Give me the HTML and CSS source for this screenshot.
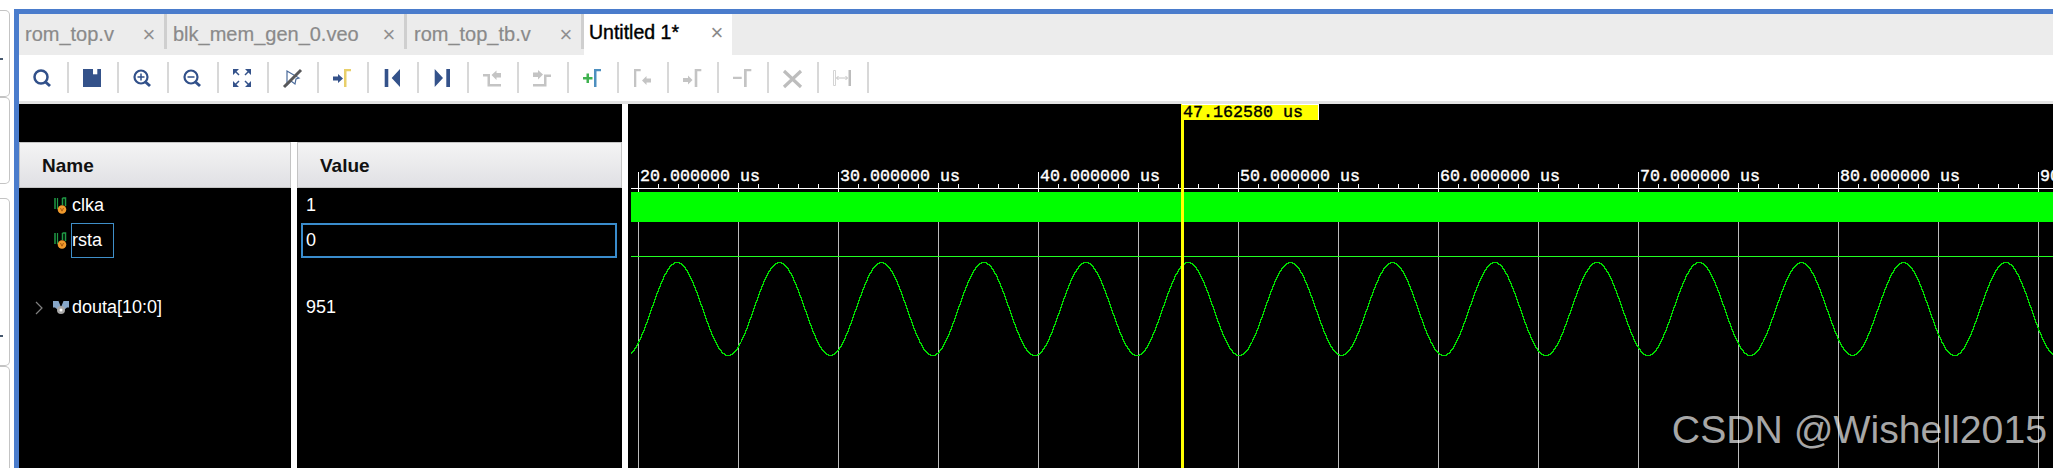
FILE: index.html
```html
<!DOCTYPE html>
<html lang="en">
<head>
    <meta charset="UTF-8">
    <title>Untitled 1</title>
    <link rel="stylesheet" href="styles.css">
</head>
<body>
    <div class="side">
        <div class="side-box"><span class="side-mark side-mark-a"></span></div>
        <div class="side-box"></div>
        <div class="side-box side-box-tall"><span class="side-mark side-mark-b"></span></div>
        <div class="side-box side-box-last"></div>
    </div>

    <div class="main">
        <div class="tabs">
            <div class="tab tab-a"><span>rom_top.v</span><span class="tab-x">×</span></div>
            <div class="tab tab-b"><span>blk_mem_gen_0.veo</span><span class="tab-x">×</span></div>
            <div class="tab tab-c"><span>rom_top_tb.v</span><span class="tab-x">×</span></div>
            <div class="tab tab-d active"><span>Untitled 1*</span><span class="tab-x">×</span></div>
        </div>

        <div class="toolbar">
            <div class="tool">
                <svg width="24" height="24" fill="none" stroke="#31508a" stroke-width="2.5"><circle cx="10" cy="12" r="6.5"/><path d="M14.5 17l4.5 4" stroke-width="3"/></svg>
            </div>
            <div class="tool">
                <svg width="24" height="24"><path d="M2 4h18v18H2z" fill="#34528a"/><path d="M12 4h4.3v5.3H12z" fill="#fff"/></svg>
            </div>
            <div class="tool">
                <svg width="24" height="24" fill="none" stroke="#31508a" stroke-width="2.2"><circle cx="10" cy="12" r="6.5"/><path d="M14.5 17l4.5 4" stroke-width="3"/><path d="M6.5 12h7M10 8.5v7" stroke-width="1.5"/></svg>
            </div>
            <div class="tool">
                <svg width="24" height="24" fill="none" stroke="#31508a" stroke-width="2.2"><circle cx="10" cy="12" r="6.5"/><path d="M14.5 17l4.5 4" stroke-width="3"/><path d="M6.5 12h7" stroke-width="1.5"/></svg>
            </div>
            <div class="tool">
                <svg width="24" height="24" fill="#34528a"><path d="M2 4h6L2 10zM20 4h-6l6 6zM2 22h6l-6-6zM20 22h-6l6-6z"/><path d="M4 6l4 4M18 6l-4 4M4 20l4-4M18 20l-4-4" stroke="#34528a" stroke-width="1.5"/></svg>
            </div>
            <div class="tool">
                <svg width="24" height="24" fill="none"><path d="M6 6v14l4-4 4 3 1-5 3-1z" stroke="#4a6a9a" stroke-width="1.2"/><path d="M3 22L20 5" stroke="#58585a" stroke-width="3"/></svg>
            </div>
            <div class="tool">
                <svg width="24" height="24"><path d="M2 11.5h5V9l5 4.5-5 4.5v-2.5H2z" fill="#34528a"/><path d="M13 22V4h7v2.3h-4.5V22z" fill="#e8cf6a"/></svg>
            </div>
            <div class="tool">
                <svg width="24" height="24" fill="#34528a"><path d="M3.7 4h3.600v18H3.7zM10.7 13L19 4v18z"/></svg>
            </div>
            <div class="tool">
                <svg width="24" height="24" fill="#34528a"><path d="M3.7 4L12 13l-8.3 9zM15.3 4h3.7v18h-3.7z"/></svg>
            </div>
            <div class="tool">
                <svg width="24" height="24" fill="#c4c4c4"><path d="M2 9h7v10h11v2.5H6.5v-10H2z"/><path d="M10.5 10l5-4.5V8H20v4.500h-4.500V15z"/></svg>
            </div>
            <div class="tool">
                <svg width="24" height="24" fill="#c4c4c4"><path d="M2 19h11V9.5h7V12h-4.5v9.500H2z"/><path d="M12 9.5l-5-4.500v2.500H2V12h5v2.500z"/></svg>
            </div>
            <div class="tool">
                <svg width="24" height="24"><path d="M2 12h3.5V8.500H8V12h3.500v2.500H8V18H5.500v-3.500H2z" fill="#3fb24f"/><path d="M13 22V4h7v2.3h-4.5V22z" fill="#4d8fbf"/></svg>
            </div>
            <div class="tool">
                <svg width="24" height="24" fill="#c4c4c4"><path d="M3 22V4h6.7v2.3H5.300V22z"/><path d="M11 15.500l4.500-4.500v2.500h4.500v4h-4.500V20z"/></svg>
            </div>
            <div class="tool">
                <svg width="24" height="24" fill="#c4c4c4"><path d="M2 13h5v-2.500l4.500 4.500L7 19.500V17H2z"/><path d="M13.700 22V4h6.600v2.300h-4V22z"/></svg>
            </div>
            <div class="tool">
                <svg width="24" height="24" fill="#c4c4c4"><path d="M2 11.700h8.700V14H2zM13 22V4h7.300v2.300H15.700V22z"/></svg>
            </div>
            <div class="tool">
                <svg width="24" height="24" fill="none" stroke="#bdbdbd" stroke-width="3.2"><path d="M3 6l17 16M20 6L3 22"/></svg>
            </div>
            <div class="tool">
                <svg width="24" height="24" fill="none"><path d="M2.500 5.500h2v15h-2z" stroke="#d4d4d4"/><path d="M5.500 13h11M7.500 11l-2 2 2 2M14.500 11l2 2-2 2" stroke="#c4c4c4"/><path d="M17.500 5h2.500v16h-2.500z" fill="#bcbcbc"/></svg>
            </div>
        </div>

        <div class="strip"></div>

        <div class="panes">
            <div class="signals">
                <div class="signals-top"></div>
                <div class="columns">
                    <div class="col col-name">
                        <div class="col-head">Name</div>
                        <div class="row row-signal">
                            <svg class="medal" width="16" height="18"><path d="M2 1v11M9.500 1H12.500V9M9.500 1v7" fill="none" stroke="#1f9a45" stroke-width="1.500"/><path d="M4.500 1v11" fill="none" stroke="#1f9a45" stroke-width="1.200"/><circle cx="9" cy="12.500" r="4.300" fill="#f09a2c"/><path d="M7.500 11l1.500 3.200 1.500-3.200" fill="none" stroke="#a85a10"/></svg>
                            <span class="sig-name">clka</span>
                        </div>
                        <div class="row row-signal">
                            <svg class="medal" width="16" height="18"><path d="M2 1v11M9.500 1H12.500V9M9.500 1v7" fill="none" stroke="#1f9a45" stroke-width="1.500"/><path d="M4.500 1v11" fill="none" stroke="#1f9a45" stroke-width="1.200"/><circle cx="9" cy="12.500" r="4.300" fill="#f09a2c"/><path d="M7.500 11l1.500 3.200 1.500-3.200" fill="none" stroke="#a85a10"/></svg>
                            <span class="sig-name sel">rsta</span>
                        </div>
                        <div class="row row-gap"></div>
                        <div class="row row-bus">
                            <svg class="chevron" width="18" height="14" fill="none" stroke="#808080" stroke-width="1.200"><path d="M1 1l6 6-6 6"/></svg>
                            <svg class="medal" width="16" height="18"><path d="M0 2h5.500l2 5-3 3.500L2 8.500H0zM16 2h-5.500l-2 5 3 3.500 2.500-2H16z" fill="#86a6c8"/><circle cx="8" cy="11" r="4" fill="#a8a8a8"/><circle cx="8" cy="11" r="1.500" fill="#fff"/></svg>
                            <span class="sig-name">douta[10:0]</span>
                        </div>
                        <div class="col-fill"></div>
                    </div>

                    <div class="col col-value">
                        <div class="col-head">Value</div>
                        <div class="row row-val">1</div>
                        <div class="row row-val val-sel">0</div>
                        <div class="row row-gap"></div>
                        <div class="row row-val">951</div>
                        <div class="col-fill"></div>
                    </div>
                </div>
            </div>

            <div class="wave">
                <div class="ruler">
                    <span class="tick-label">20.000000 us</span>
                    <span class="tick-label">30.000000 us</span>
                    <span class="tick-label">40.000000 us</span>
                    <span class="tick-label">50.000000 us</span>
                    <span class="tick-label">60.000000 us</span>
                    <span class="tick-label">70.000000 us</span>
                    <span class="tick-label">80.000000 us</span>
                    <span class="tick-label">90.000000 us</span>
                </div>
                <div class="traces">
                    <div class="band"></div>
                    <div class="zero-line"></div>
                    <svg id="sine" width="1422" height="110"></svg>
                </div>

                <div class="cursor"></div>
                <div class="cursor-label">47.162580 us</div>
                <div class="watermark">CSDN @Wishell2015</div>
            </div>
        </div>
    </div>

    <script src="script.js"></script>
</body>
</html>
```

FILE: styles.css
```css
html, body {
    margin: 0;
    height: 468px;
    overflow: hidden;
    background-color: #fff;
}

body {
    display: flex;
    font-family: "Liberation Sans", Arial, sans-serif;
}

/* left edge, neighbouring panels */
.side {
    flex: none;
    width: 14px;
    padding-top: 10px;
    box-sizing: border-box;
}

.side-box {
    position: relative;
    width: 9px;
    height: 85px;
    border: 1px solid #c4c4c4;
    border-left: none;
    border-radius: 0 5px 5px 0;
}

.side-box-tall {
    height: 166px;
    margin-top: 14px;
}

.side-box-last {
    height: 120px;
}

.side-mark {
    position: absolute;
    left: 0;
    width: 3px;
    height: 2px;
    background-color: #46586e;
}

.side-mark-a {
    top: 47px;
}

.side-mark-b {
    top: 136px;
}

/* main frame */
.main {
    flex: 1;
    min-width: 0;
    margin-top: 9px;
    border-top: 5px solid #4a7ccc;
    border-left: 5px solid #4a7ccc;
    display: flex;
    flex-direction: column;
}

.tabs {
    flex: none;
    display: flex;
    align-items: flex-start;
    height: 41px;
    background-color: #ececec;
}

.tab {
    display: flex;
    justify-content: space-between;
    align-items: center;
    height: 35px;
    box-sizing: border-box;
    padding: 6px 6px 0 6px;
    border-right: 3px solid #cfcfcf;
    font-size: 20px;
    color: #8a8a8a;
    -webkit-text-stroke: 0.2px #8a8a8a;
}

.tab-a {
    width: 148px;
}

.tab-b {
    width: 240px;
}

.tab-c {
    width: 177px;
    padding-left: 7px;
}

.tab-d {
    width: 148px;
}

.tab.active {
    height: 41px;
    padding: 0 6px 4px 5px;
    border-right: none;
    background-color: #fff;
    color: #000;
    font-size: 19.5px;
    -webkit-text-stroke: 0.4px #000;
}

.tab-x {
    width: 14px;
    padding-right: 2px;
    text-align: center;
    font-size: 22px;
    color: #909090;
    -webkit-text-stroke: 0;
}

.tab.active .tab-x {
    -webkit-text-stroke: 0;
    color: #8a8a8a;
}

/* toolbar */
.toolbar {
    flex: none;
    display: flex;
    height: 46px;
    box-sizing: border-box;
    padding-top: 7px;
    background-color: #fff;
}

.tool {
    flex: none;
    display: flex;
    align-items: flex-start;
    justify-content: center;
    width: 48px;
    height: 31px;
    border-right: 2px solid #d8d8d8;
}

.tool svg {
    display: block;
    margin-top: 3px;
}

.strip {
    flex: none;
    height: 3px;
    background-color: #e4e4e4;
}

.panes {
    flex: 1;
    display: flex;
    min-height: 0;
    column-gap: 6px;
}

/* signal list */
.signals {
    flex: none;
    width: 603px;
    display: flex;
    flex-direction: column;
}

.signals-top {
    flex: none;
    height: 38px;
    background-color: #000;
}

.columns {
    flex: 1;
    display: flex;
    column-gap: 6px;
}

.col {
    display: flex;
    flex-direction: column;
    background-color: #000;
    color: #fff;
    font-size: 18px;
}

.col-name {
    width: 272px;
}

.col-value {
    width: 325px;
}

.col-fill {
    flex: 1;
}

.col-head {
    flex: none;
    height: 46px;
    line-height: 45px;
    box-sizing: border-box;
    padding-left: 22px;
    border: 1px solid #c4c4c4;
    background: linear-gradient(#f4f4f4, #e0e0e4);
    color: #111;
    font-size: 19px;
    font-weight: bold;
}

.row {
    flex: none;
    display: flex;
    align-items: center;
    height: 35px;
    box-sizing: border-box;
}

.row-gap {
    height: 32px;
}

.row-signal {
    padding-left: 34px;
}

.row-bus {
    padding-left: 16px;
}

.medal {
    flex: none;
    margin-right: 2px;
}

.chevron {
    flex: none;
}

.sig-name {
    height: 35px;
    line-height: 33px;
    box-sizing: border-box;
    padding-right: 11px;
    border: 1px solid transparent;
}

.sig-name.sel {
    border-color: #3f8fc9;
}

.row-val {
    padding-left: 9px;
}

.val-sel {
    margin: 0 5px 0 4px;
    padding-left: 3px;
    border: 2px solid #3a8ccc;
}

/* waveform */
.wave {
    flex: 1;
    min-width: 0;
    position: relative;
    display: flex;
    flex-direction: column;
    padding-left: 3px;
    background-color: #000;
    overflow: hidden;
}

.ruler {
    flex: none;
    display: flex;
    height: 88px;
    box-sizing: border-box;
    padding: 63px 0 0 9px;
    background-image:
        linear-gradient(#fff, #fff),
        linear-gradient(90deg, #fff 1px, transparent 1px),
        linear-gradient(90deg, #fff 1px, transparent 1px),
        linear-gradient(90deg, #fff 1px, transparent 1px);
    background-repeat: no-repeat, repeat-x, repeat-x, repeat-x;
    background-size: 100% 1px, 20px 4px, 100px 9px, 200px 20px;
    background-position: 0 84px, 7px 80px, 7px 79px, 7px 68px;
}

.tick-label {
    flex: none;
    width: 200px;
    font-family: "Liberation Mono", "Courier New", monospace;
    font-size: 16.67px;
    line-height: 20px;
    color: #fff;
    -webkit-text-stroke: 0.4px #fff;
}

.traces {
    flex: 1;
    min-height: 0;
    background: linear-gradient(90deg, #bbb 1px, transparent 1px) 7px 0 / 100px 100%;
}

.band {
    height: 30px;
    background-color: #0f0;
}

.zero-line {
    height: 1px;
    margin-top: 34px;
    background-color: #2f2;
}

#sine {
    display: block;
}

#sine polyline {
    fill: none;
    stroke: #0d0;
    stroke-width: 1;
    shape-rendering: crispEdges;
}

.cursor {
    position: absolute;
    top: 0;
    bottom: 0;
    left: 553px;
    width: 3px;
    background-color: #ff0;
}

.cursor-label {
    position: absolute;
    top: 0;
    left: 554px;
    width: 135px;
    height: 15px;
    padding-left: 1px;
    border-top: 1px solid #fff;
    border-right: 1px solid #fff;
    background-color: #ff0;
    font-family: "Liberation Mono", "Courier New", monospace;
    font-size: 16.67px;
    line-height: 16px;
    color: #000;
    -webkit-text-stroke: 0.4px #000;
}

.watermark {
    position: absolute;
    right: 6px;
    bottom: 15px;
    font-size: 39.2px;
    line-height: 46px;
    color: rgba(255, 255, 255, 0.66);
    white-space: nowrap;
}
```

FILE: script.js
```js
// 곡선은 좌표가 많아서 스크립트로 그림
const sine = document.querySelector('#sine');
const period = 102.2;
const peakX = 1086 - 631;
const top_y = 262 - 257;
const amp = 46.5;

const points = [];
for (let x = 0; x <= 1422; x++) {
    const y = top_y + amp - amp * Math.cos((x - peakX) / period * Math.PI * 2);
    points.push(x + ',' + (Math.round(y) + 0.5));
}

const line = document.createElementNS('http://www.w3.org/2000/svg', 'polyline');
line.setAttribute('points', points.join(' '));
sine.appendChild(line);
```
